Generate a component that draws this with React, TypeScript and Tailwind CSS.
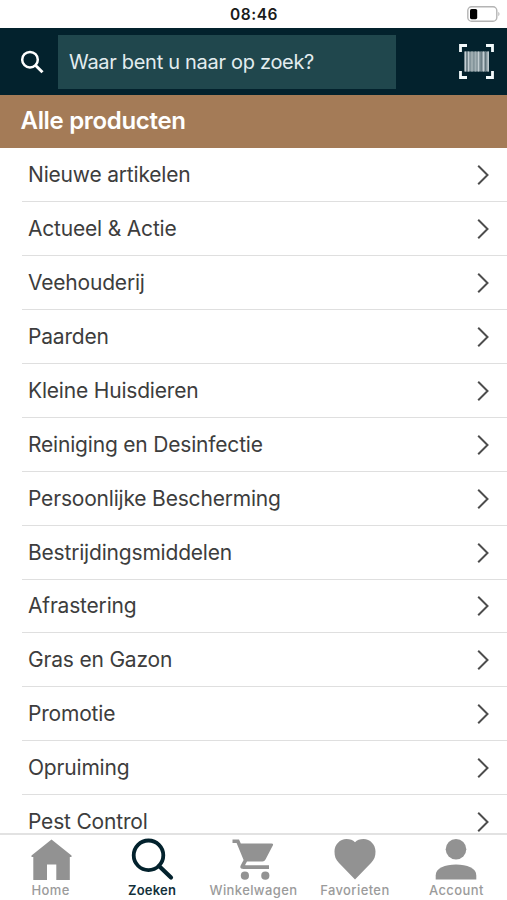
import React from "react";

const categories = [
  "Nieuwe artikelen",
  "Actueel & Actie",
  "Veehouderij",
  "Paarden",
  "Kleine Huisdieren",
  "Reiniging en Desinfectie",
  "Persoonlijke Bescherming",
  "Bestrijdingsmiddelen",
  "Afrastering",
  "Gras en Gazon",
  "Promotie",
  "Opruiming",
  "Pest Control",
];

function StatusBar() {
  return (
    <div className="flex h-7 shrink-0 items-center justify-between bg-white pl-[230px] pr-[7px]">
      <span className="pt-[2px] text-[15.5px] font-semibold leading-none tracking-[0.55px] text-[#1a1a1a]">08:46</span>
      <svg width="33" height="16" viewBox="0 0 33 16" fill="none">
        <rect x="0.8" y="0.8" width="29" height="14.4" rx="3.8" stroke="#b4b4b4" strokeWidth="1.4" />
        <rect x="3" y="3" width="7.2" height="10.2" rx="1.6" fill="#000" />
        <path d="M31.3 5.8c1.6.8 1.6 3.6 0 4.4z" fill="#b4b4b4" />
      </svg>
    </div>
  );
}

function BarcodeIcon() {
  return (
    <svg width="35" height="35" viewBox="0 0 35 35" fill="none">
      <path d="M1.5 8V1.5H8M27 1.5h6.5V8M33.5 27v6.5H27M8 33.5H1.5V27" stroke="#f2fafb" strokeWidth="2.8" />
      <rect x="5.5" y="7.5" width="24.5" height="20" fill="#84959b" />
      <path d="M6.3 7.5v20M9.5 7.5v20M19.5 7.5v20M24.5 7.5v20M29.2 7.5v20" stroke="#c3ced2" strokeWidth="1.4" />
      <path d="M8 7.5v20M22.2 7.5v20M26.5 7.5v20" stroke="#62757c" strokeWidth="1" />
      <path d="M13 7.5v20M16.5 7.5v20" stroke="#a3b1b5" strokeWidth="1.6" />
    </svg>
  );
}

function Header() {
  return (
    <header className="flex h-[67px] shrink-0 items-center bg-[#03222d]">
      <svg className="ml-5 shrink-0" width="24" height="24" viewBox="0 0 24 24" fill="none" stroke="#fff" strokeWidth="2.5">
        <circle cx="10" cy="9.7" r="7.8" />
        <path d="M15.4 15.2l7.1 7" strokeWidth="3" />
      </svg>
      <div className="ml-[14px] flex h-[54px] w-[338px] items-center bg-[#20474d] pl-[11px]">
        <span className="whitespace-nowrap text-[20px] leading-none tracking-[-0.3px] text-[#e3edef]">Waar bent u naar op zoek?</span>
      </div>
      <div className="ml-auto mr-[13px]">
        <BarcodeIcon />
      </div>
    </header>
  );
}

function CategoryRow({ label }: { label: string }) {
  return (
    <li className="ml-[22px] flex h-[53.94px] shrink-0 items-center justify-between border-b border-[#dfdfdf] pl-[6px] pr-[17px]">
      <span className="whitespace-nowrap text-[21px] leading-none tracking-[-0.19px] text-[#3d3d3d]">{label}</span>
      <svg className="mt-px" width="14" height="22" viewBox="0 0 14 22" fill="none" stroke="#4d4d4d" strokeWidth="2">
        <path d="M2.2 1.8L11.5 11L2.2 20.2" />
      </svg>
    </li>
  );
}

const HomeIcon = (
  <path d="M22.5 1.5L42.5 17.5V19H40.8V42H27.3V26.5H18V42H4.300V19H2.500V17.5Z" fill="#929292" />
);
const SearchIcon = (
  <g fill="none" stroke="#03222d">
    <circle cx="18.5" cy="17.3" r="14.8" strokeWidth="3.8" />
    <path d="M29 28L41 39.5" strokeWidth="4.2" strokeLinecap="round" />
  </g>
);
const CartIcon = (
  <g fill="#929292">
    <path
      fillRule="evenodd"
      d="M1.5 1.500H8L9.800 5.500H40.500Q42.800 5.500 41.800 7.600L34.500 21.600Q33.500 23.500 31.500 23.500H16L14.300 26.600Q14 27.300 15 27.300H38V31H12.500Q8 31 9.800 27.200L12.600 22L5.600 5H1.500Z"
    />
    <circle cx="13.9" cy="37.7" r="4.1" />
    <circle cx="34.3" cy="37.7" r="4.1" />
  </g>
);
const HeartIcon = (
  <path d="M22 41.5L6 25C2.5 21.5 1.5 18 1.5 13.5C1.5 6.5 7 1 13.5 1C17 1 20 2.1 22 4.3C24 2.1 27 1 30.5 1C37 1 42.5 6.5 42.5 13.5C42.5 18 41.5 21.5 38 25Z" fill="#929292" />
);
const AccountIcon = (
  <g fill="#929292">
    <circle cx="22" cy="11.2" r="10.3" />
    <path d="M1.7 41.5V37.5C1.7 30 11 26.5 22 26.5S42.3 30 42.3 37.5V41.5Z" />
  </g>
);

const tabs = [
  { label: "Home", icon: HomeIcon, active: false },
  { label: "Zoeken", icon: SearchIcon, active: true },
  { label: "Winkelwagen", icon: CartIcon, active: false },
  { label: "Favorieten", icon: HeartIcon, active: false },
  { label: "Account", icon: AccountIcon, active: false },
];

function TabBar() {
  return (
    <nav className="grid h-[67px] shrink-0 grid-cols-5 border-t-2 border-[#e2e2e2] bg-white">
      {tabs.map((tab) => (
        <div key={tab.label} className="flex flex-col items-center pt-[3px]">
          <svg width="44" height="44" viewBox="0 0 44 44">{tab.icon}</svg>
          <span
            className={
              tab.active
                ? "whitespace-nowrap text-[13px] font-semibold leading-[16px] tracking-[0.2px] text-[#12303a]"
                : "whitespace-nowrap text-[13px] font-medium leading-[16px] tracking-[0.4px] text-[#9b9b9b]"
            }
          >
            {tab.label}
          </span>
        </div>
      ))}
    </nav>
  );
}

export default function App() {
  return (
    <div className="flex h-[900px] w-[507px] flex-col overflow-hidden bg-white font-['Inter','Liberation_Sans',sans-serif]">
      <StatusBar />
      <Header />
      <div className="flex h-[53px] shrink-0 items-center bg-[#a47b57] pb-[2px] pl-[20.5px]">
        <h1 className="whitespace-nowrap text-[24px] font-semibold leading-none tracking-[-0.32px] text-white">Alle producten</h1>
      </div>
      <ul className="flex min-h-0 flex-1 flex-col overflow-hidden">
        {categories.map((label) => (
          <CategoryRow key={label} label={label} />
        ))}
      </ul>
      <TabBar />
    </div>
  );
}
